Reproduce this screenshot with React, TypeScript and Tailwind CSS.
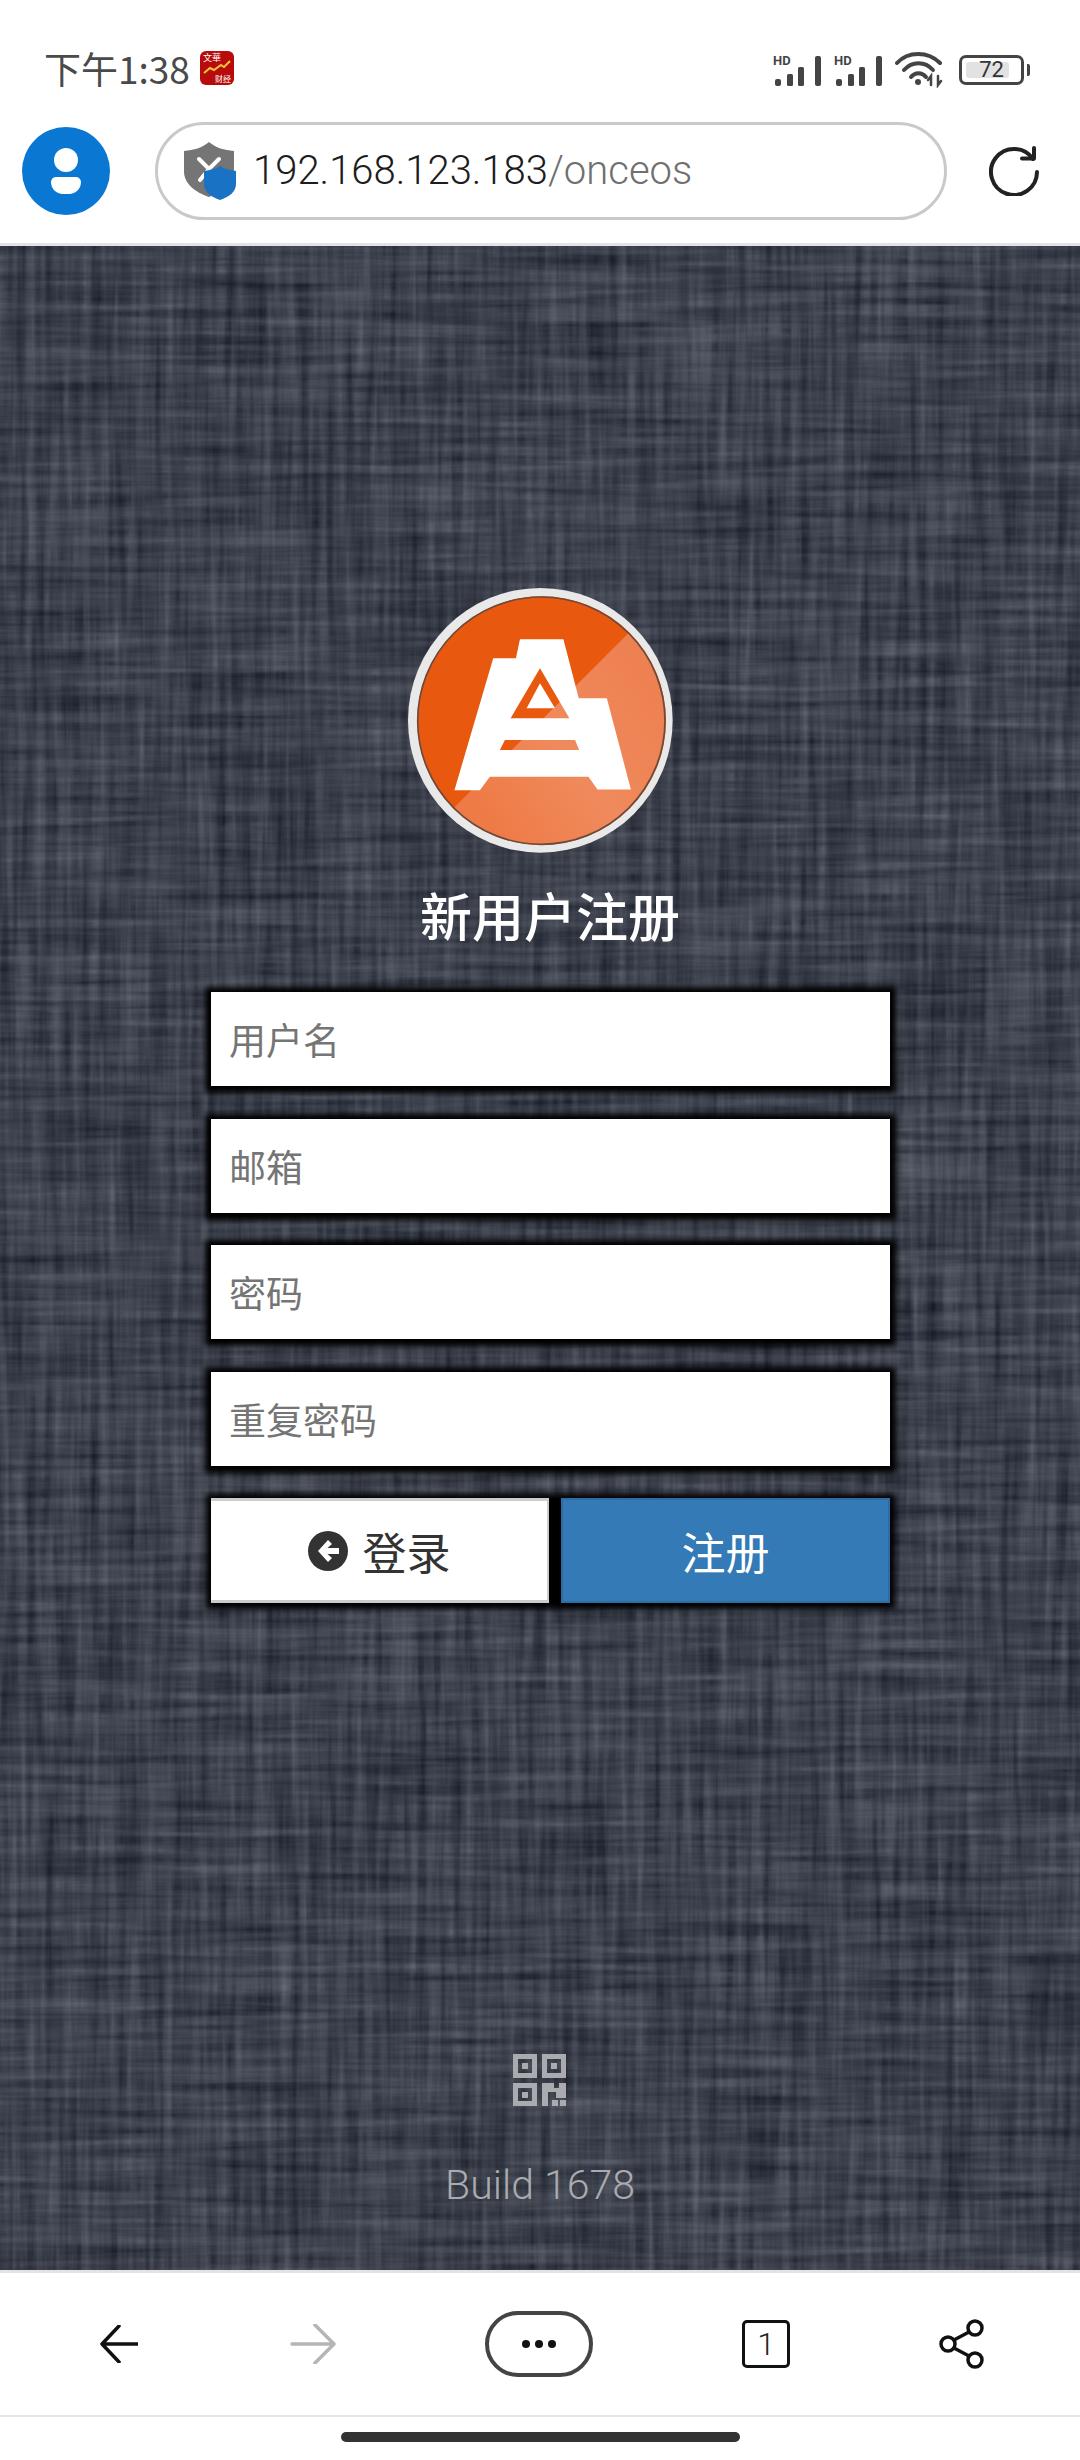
const cjk = "font-['Noto_Sans_CJK_SC','Noto_Sans',sans-serif]";

function Signal() {
  return (
    <svg width="50" height="32" viewBox="0 0 50 32" fill="#444">
      <text x="0" y="11" fontSize="13" fontWeight="700" fontFamily="Roboto, sans-serif">HD</text>
      <rect x="2" y="25" width="6" height="7" rx="2" />
      <rect x="14" y="20" width="6" height="12" rx="1.5" />
      <rect x="25" y="13" width="6" height="19" rx="1.5" />
      <rect x="37" y="2" width="6" height="30" rx="2" transform="translate(5 0)" />
    </svg>
  );
}

function Wifi() {
  return (
    <svg width="50" height="36" viewBox="0 0 50 36" fill="none" stroke="#444" strokeWidth="4" strokeLinecap="round">
      <path d="M2 11C13 -1 33 -1 45 11" />
      <path d="M9 18C17 9 30 9 38 18" />
      <path d="M16 25C20 20 27 20 31 25" />
      <circle cx="23" cy="30" r="3" fill="#444" stroke="none" />
      <path d="M36 33v-9l-3 4M43 24v9l3-4" strokeWidth="2.5" />
    </svg>
  );
}

function Battery() {
  return (
    <div className="flex items-center gap-[3px]">
      <div className="relative flex h-[30px] w-[65px] items-center justify-center rounded-[7px] border-[3px] border-[#444] px-[4px]">
        <div className="absolute left-[4px] top-[4px] h-[16px] w-[43px] rounded-[3px] bg-[#e2e2e2]" />
        <span className="relative font-['Roboto',sans-serif] text-[22px] leading-none text-[#333]">72</span>
      </div>
      <div className="h-[12px] w-[3px] rounded-r-[2px] bg-[#444]" />
    </div>
  );
}

function ShieldIcon() {
  return (
    <svg width="52" height="58" viewBox="0 0 52 58">
      <path d="M25 0C32 6 40 8 50 9V29C50 42 39 50 25 55C11 50 0 42 0 29V9C10 8 18 6 25 0Z" fill="#757575" />
      <path d="M15 17L25 27L35 17M25 27L16 38" fill="none" stroke="#fff" strokeWidth="4" strokeLinecap="round" />
      <path d="M36 24C40 27 46 28 52 29V42C52 50 45 55 36 58C27 55 20 50 20 42V29C26 28 32 27 36 24Z" fill="#1a72c4" />
    </svg>
  );
}

function RefreshIcon() {
  return (
    <svg width="50" height="50" viewBox="0 0 50 50" fill="none" stroke="#222" strokeWidth="4" strokeLinecap="round" strokeLinejoin="round">
      <path d="M44 13A23 23 0 1 0 48 26" />
      <path d="M33 12.500H45V2" />
    </svg>
  );
}

function LogoMark() {
  return (
    <svg width="265" height="265" viewBox="85 55 793 793">
      <defs>
        <linearGradient id="shine" x1="0.2" y1="0.9" x2="0.95" y2="0.35">
          <stop offset="0" stopColor="#ee7a45" />
          <stop offset="0.5" stopColor="#f08a5c" />
          <stop offset="1" stopColor="#ee8152" />
        </linearGradient>
        <clipPath id="disc">
          <circle cx="485" cy="452" r="370" />
        </clipPath>
      </defs>
      <circle cx="481" cy="451" r="396" fill="#e9e9e9" />
      <circle cx="485" cy="452" r="372" fill="#e8580f" />
      <g clipPath="url(#disc)">
        <path d="M745 190L225 710L300 900L900 900V190Z" fill="url(#shine)" />
      </g>
      <circle cx="484" cy="452" r="370" fill="none" stroke="#6d4a3a" strokeWidth="5" />
      <path
        fillRule="evenodd"
        fill="#fff"
        d="M420 208H550L596 385H680L752 658H652L625 620H330L300 660H224L340 265H408ZM480 295L392 445H568ZM375 510L360 540H597L585 510Z"
      />
      <path d="M480 340L525 415H440Z" fill="#fff" />
    </svg>
  );
}

function QrIcon() {
  return (
    <svg width="53" height="52" viewBox="0 0 53 52" fill="#a9abaf">
      <path fillRule="evenodd" d="M0 0H24V24H0ZM5 5V19H19V5Z" />
      <rect x="9" y="9" width="6" height="6" />
      <path fillRule="evenodd" d="M29 0H53V24H29ZM34 5V19H48V5Z" />
      <rect x="38" y="9" width="6" height="6" />
      <path fillRule="evenodd" d="M0 29H24V52H0ZM5 34V47H19V34Z" />
      <rect x="9" y="38" width="6" height="6" />
      <path d="M29 29H41V34H46V29H53V44H43V38H35V52H29Z" />
      <rect x="39" y="46" width="6" height="6" />
      <rect x="47" y="46" width="6" height="6" />
    </svg>
  );
}

function Texture() {
  return (
    <svg aria-hidden="true" className="absolute inset-0 h-full w-full">
      <filter id="linen" x="0" y="0" width="100%" height="100%" colorInterpolationFilters="sRGB">
        <feTurbulence type="fractalNoise" baseFrequency="0.11 0.006" numOctaves="3" seed="4" result="v" />
        <feTurbulence type="fractalNoise" baseFrequency="0.006 0.11" numOctaves="3" seed="9" result="h" />
        <feComposite in="v" in2="h" operator="arithmetic" k1="0" k2="0.5" k3="0.5" k4="0" />
        <feColorMatrix
          type="matrix"
          values="0.42 0 0 0 0.025  0.42 0 0 0 0.045  0.42 0 0 0 0.09  0 0 0 0 1"
        />
      </filter>
      <rect width="100%" height="100%" filter="url(#linen)" />
    </svg>
  );
}

function Field({ placeholder }: { placeholder: string }) {
  return (
    <input
      placeholder={placeholder}
      className={`h-[94px] w-full bg-white pl-[18px] text-[37px] text-[#555] shadow-[0_1px_6px_6px_#000] outline-none placeholder:text-[#757575] ${cjk}`}
    />
  );
}

export default function App() {
  return (
    <div className={`flex h-[2460px] w-[1080px] flex-col overflow-hidden bg-white ${cjk}`}>
      <header className="h-[246px] border-b-[3px] border-[#e3e3e3] bg-white">
        <div className="flex h-[122px] items-start justify-between pl-[44px] pr-[50px] pt-[48px]">
          <div className="flex items-center gap-[10px]">
            <span className="text-[37px] leading-[40px] text-[#4a4a4a]">下午1:38</span>
            <div className="relative flex h-[34px] w-[34px] flex-col justify-between rounded-[6px] bg-[#b80c0c] px-[3px] py-[2px] text-white">
              <span className="text-left text-[9px] leading-[10px]">文華</span>
              <svg className="absolute left-[3px] top-[9px]" width="28" height="14" viewBox="0 0 28 14" fill="none" stroke="#f5c33b" strokeWidth="2">
                <path d="M1 13L7 8L11 10L18 5L21 7L27 1" />
              </svg>
              <span className="text-right text-[8px] leading-[9px]">财经</span>
            </div>
          </div>
          <div className="flex items-center gap-[11px] pt-[4px]">
            <Signal />
            <Signal />
            <Wifi />
            <div className="ml-[3px]">
              <Battery />
            </div>
          </div>
        </div>
        <div className="flex items-center pl-[22px]">
          <button className="flex h-[88px] w-[88px] flex-col items-center justify-center gap-[5px] rounded-full bg-[#0a78d2]">
            <span className="h-[24px] w-[24px] rounded-full bg-white" />
            <span className="h-[17px] w-[30px] rounded-b-[14px] rounded-t-[6px] bg-white" />
          </button>
          <div className="ml-[45px] flex h-[98px] w-[792px] items-center rounded-full border-[3px] border-[#c9c9c9] pl-[26px]">
            <ShieldIcon />
            <span className="ml-[17px] font-['Roboto',sans-serif] text-[40px] font-light text-[#1d1d1d]">
              192.168.123.183<span className="text-[#6f6f6f]">/onceos</span>
            </span>
          </div>
          <div className="ml-[42px]">
            <RefreshIcon />
          </div>
        </div>
      </header>

      <main className="relative h-[2024px] overflow-hidden bg-[#3c414c]">
        <Texture />
        <div className="relative flex h-full flex-col items-center pt-[342px]">
          <LogoMark />
          <h1 className="ml-[20px] mt-[32px] text-[52px] font-medium leading-[60px] text-white">新用户注册</h1>
          <form className="ml-[21px] mt-[47px] flex w-[679px] flex-col gap-[32.500px]">
            <Field placeholder="用户名" />
            <Field placeholder="邮箱" />
            <Field placeholder="密码" />
            <Field placeholder="重复密码" />
            <div className="flex h-[105px] shadow-[0_1px_6px_5px_#000]">
              <button
                type="button"
                className="flex w-[338px] items-center justify-center gap-[15px] border-y-[3px] border-r-[2px] border-[#cccccc] bg-white text-[44px] text-[#333]"
              >
                <svg width="40" height="40" viewBox="0 0 40 40">
                  <circle cx="20" cy="20" r="20" fill="#333" />
                  <path d="M20 9L10 20L20 31L24 27L19.500 23H31V17H19.500L24 13Z" fill="#fff" />
                </svg>
                <span>登录</span>
              </button>
              <div className="w-[12px] bg-black" />
              <button type="button" className="flex-1 border-[2px] border-[#2e6da4] bg-[#337ab7] text-[44px] text-white">
                注册
              </button>
            </div>
          </form>
          <div className="mt-[451px] flex flex-col items-center">
            <QrIcon />
            <span className="mt-[51px] font-['Roboto',sans-serif] text-[41px] font-light leading-[56px] text-[#a9abaf]">Build 1678</span>
          </div>
        </div>
      </main>

      <footer className="flex-1 border-t-[3px] border-[#e3e3e3] bg-white">
        <nav className="flex h-[144px] items-center border-b-[2px] border-[#e5e5e5]">
          <svg className="ml-[100px]" width="38" height="38" viewBox="0 0 38 38" fill="none" stroke="#111" strokeWidth="3.500" strokeLinecap="round" strokeLinejoin="round">
            <path d="M38 19H2M19 1L2 19L19 37" />
          </svg>
          <svg className="ml-[152px]" width="46" height="40" viewBox="0 0 46 40" fill="none" stroke="#b5b5b5" strokeWidth="3.500" strokeLinecap="round" strokeLinejoin="round">
            <path d="M2 20H44M25 1L44 20L25 39" />
          </svg>
          <div className="ml-[149px] flex h-[66px] w-[108px] items-center justify-center gap-[5px] rounded-[33px] border-[4px] border-[#444]">
            <span className="h-[8px] w-[8px] rounded-full bg-[#111]" />
            <span className="h-[8px] w-[8px] rounded-full bg-[#111]" />
            <span className="h-[8px] w-[8px] rounded-full bg-[#111]" />
          </div>
          <div className="ml-[149px] flex h-[48px] w-[48px] items-center justify-center rounded-[5px] border-[3.500px] border-[#111] font-['Roboto',sans-serif] text-[32px] font-light text-[#222]">
            1
          </div>
          <svg className="ml-[149px]" width="46" height="50" viewBox="0 0 46 50" fill="none" stroke="#111" strokeWidth="3.500">
            <circle cx="9" cy="25" r="7" />
            <circle cx="36" cy="9" r="7" />
            <circle cx="36" cy="41" r="7" />
            <path d="M15 21L30 13M15 29L30 37" />
          </svg>
        </nav>
        <div className="flex justify-center pt-[15px]">
          <div className="h-[10px] w-[399px] rounded-full bg-[#333]" />
        </div>
      </footer>
    </div>
  );
}
